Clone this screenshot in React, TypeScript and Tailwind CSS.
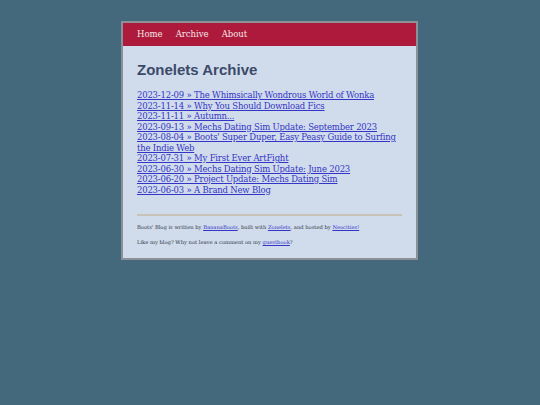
import React from "react";

const posts = [
  ["2023-12-09", "The Whimsically Wondrous World of Wonka"],
  ["2023-11-14", "Why You Should Download Fics"],
  ["2023-11-11", "Autumn..."],
  ["2023-09-13", "Mechs Dating Sim Update: September 2023"],
  ["2023-08-04", "Boots' Super Duper, Easy Peasy Guide to Surfing the Indie Web"],
  ["2023-07-31", "My First Ever ArtFight"],
  ["2023-06-30", "Mechs Dating Sim Update: June 2023"],
  ["2023-06-20", "Project Update: Mechs Dating Sim"],
  ["2023-06-03", "A Brand New Blog"],
];

export default function App() {
  return (
    <div className="min-h-[405px] w-[540px] bg-[#45697c] pt-[21px]" style={{ fontFamily: '"DejaVu Serif", Georgia, serif' }}>
      <div className="ml-[121px] w-[297px] border-2 border-[#8b9196] bg-[#d0dcec]">
        <nav className="flex h-[23px] items-center gap-[13px] bg-[#ad1a3b] pl-[14px] text-[8.5px] text-[#f6e6ea]">
          <span>Home</span>
          <span>Archive</span>
          <span>About</span>
        </nav>
        <div className="px-[14px] pb-[12px]">
          <h1 className="mt-[14px] text-[15px] font-bold leading-[20px] text-[#3c4a6a]" style={{ fontFamily: '"Liberation Sans", Arial, sans-serif' }}>
            Zonelets Archive
          </h1>
          <ul className="mt-[10px] text-[8.5px] leading-[10.5px] tracking-[-0.2px]">
            {posts.map(([d, t]) => (
              <li key={d}>
                <a className="text-[#3434c6] underline">{d} » {t}</a>
              </li>
            ))}
          </ul>
          <hr className="mt-[19px] border-t-2 border-[#c7c3b6]" />
          <p className="mt-[7px] text-[5.2px] leading-[8px] text-[#2e3444]">
            Boots' Blog is written by <a className="text-[#3434c6] underline">BananaBoots</a>, built with{" "}
            <a className="text-[#3434c6] underline">Zonelets</a>, and hosted by{" "}
            <a className="text-[#3434c6] underline">Neocities!</a>
          </p>
          <p className="mt-[7px] text-[5.2px] leading-[8px] text-[#2e3444]">
            Like my blog? Why not leave a comment on my <a className="text-[#3434c6] underline">guestbook</a>?
          </p>
        </div>
      </div>
    </div>
  );
}
